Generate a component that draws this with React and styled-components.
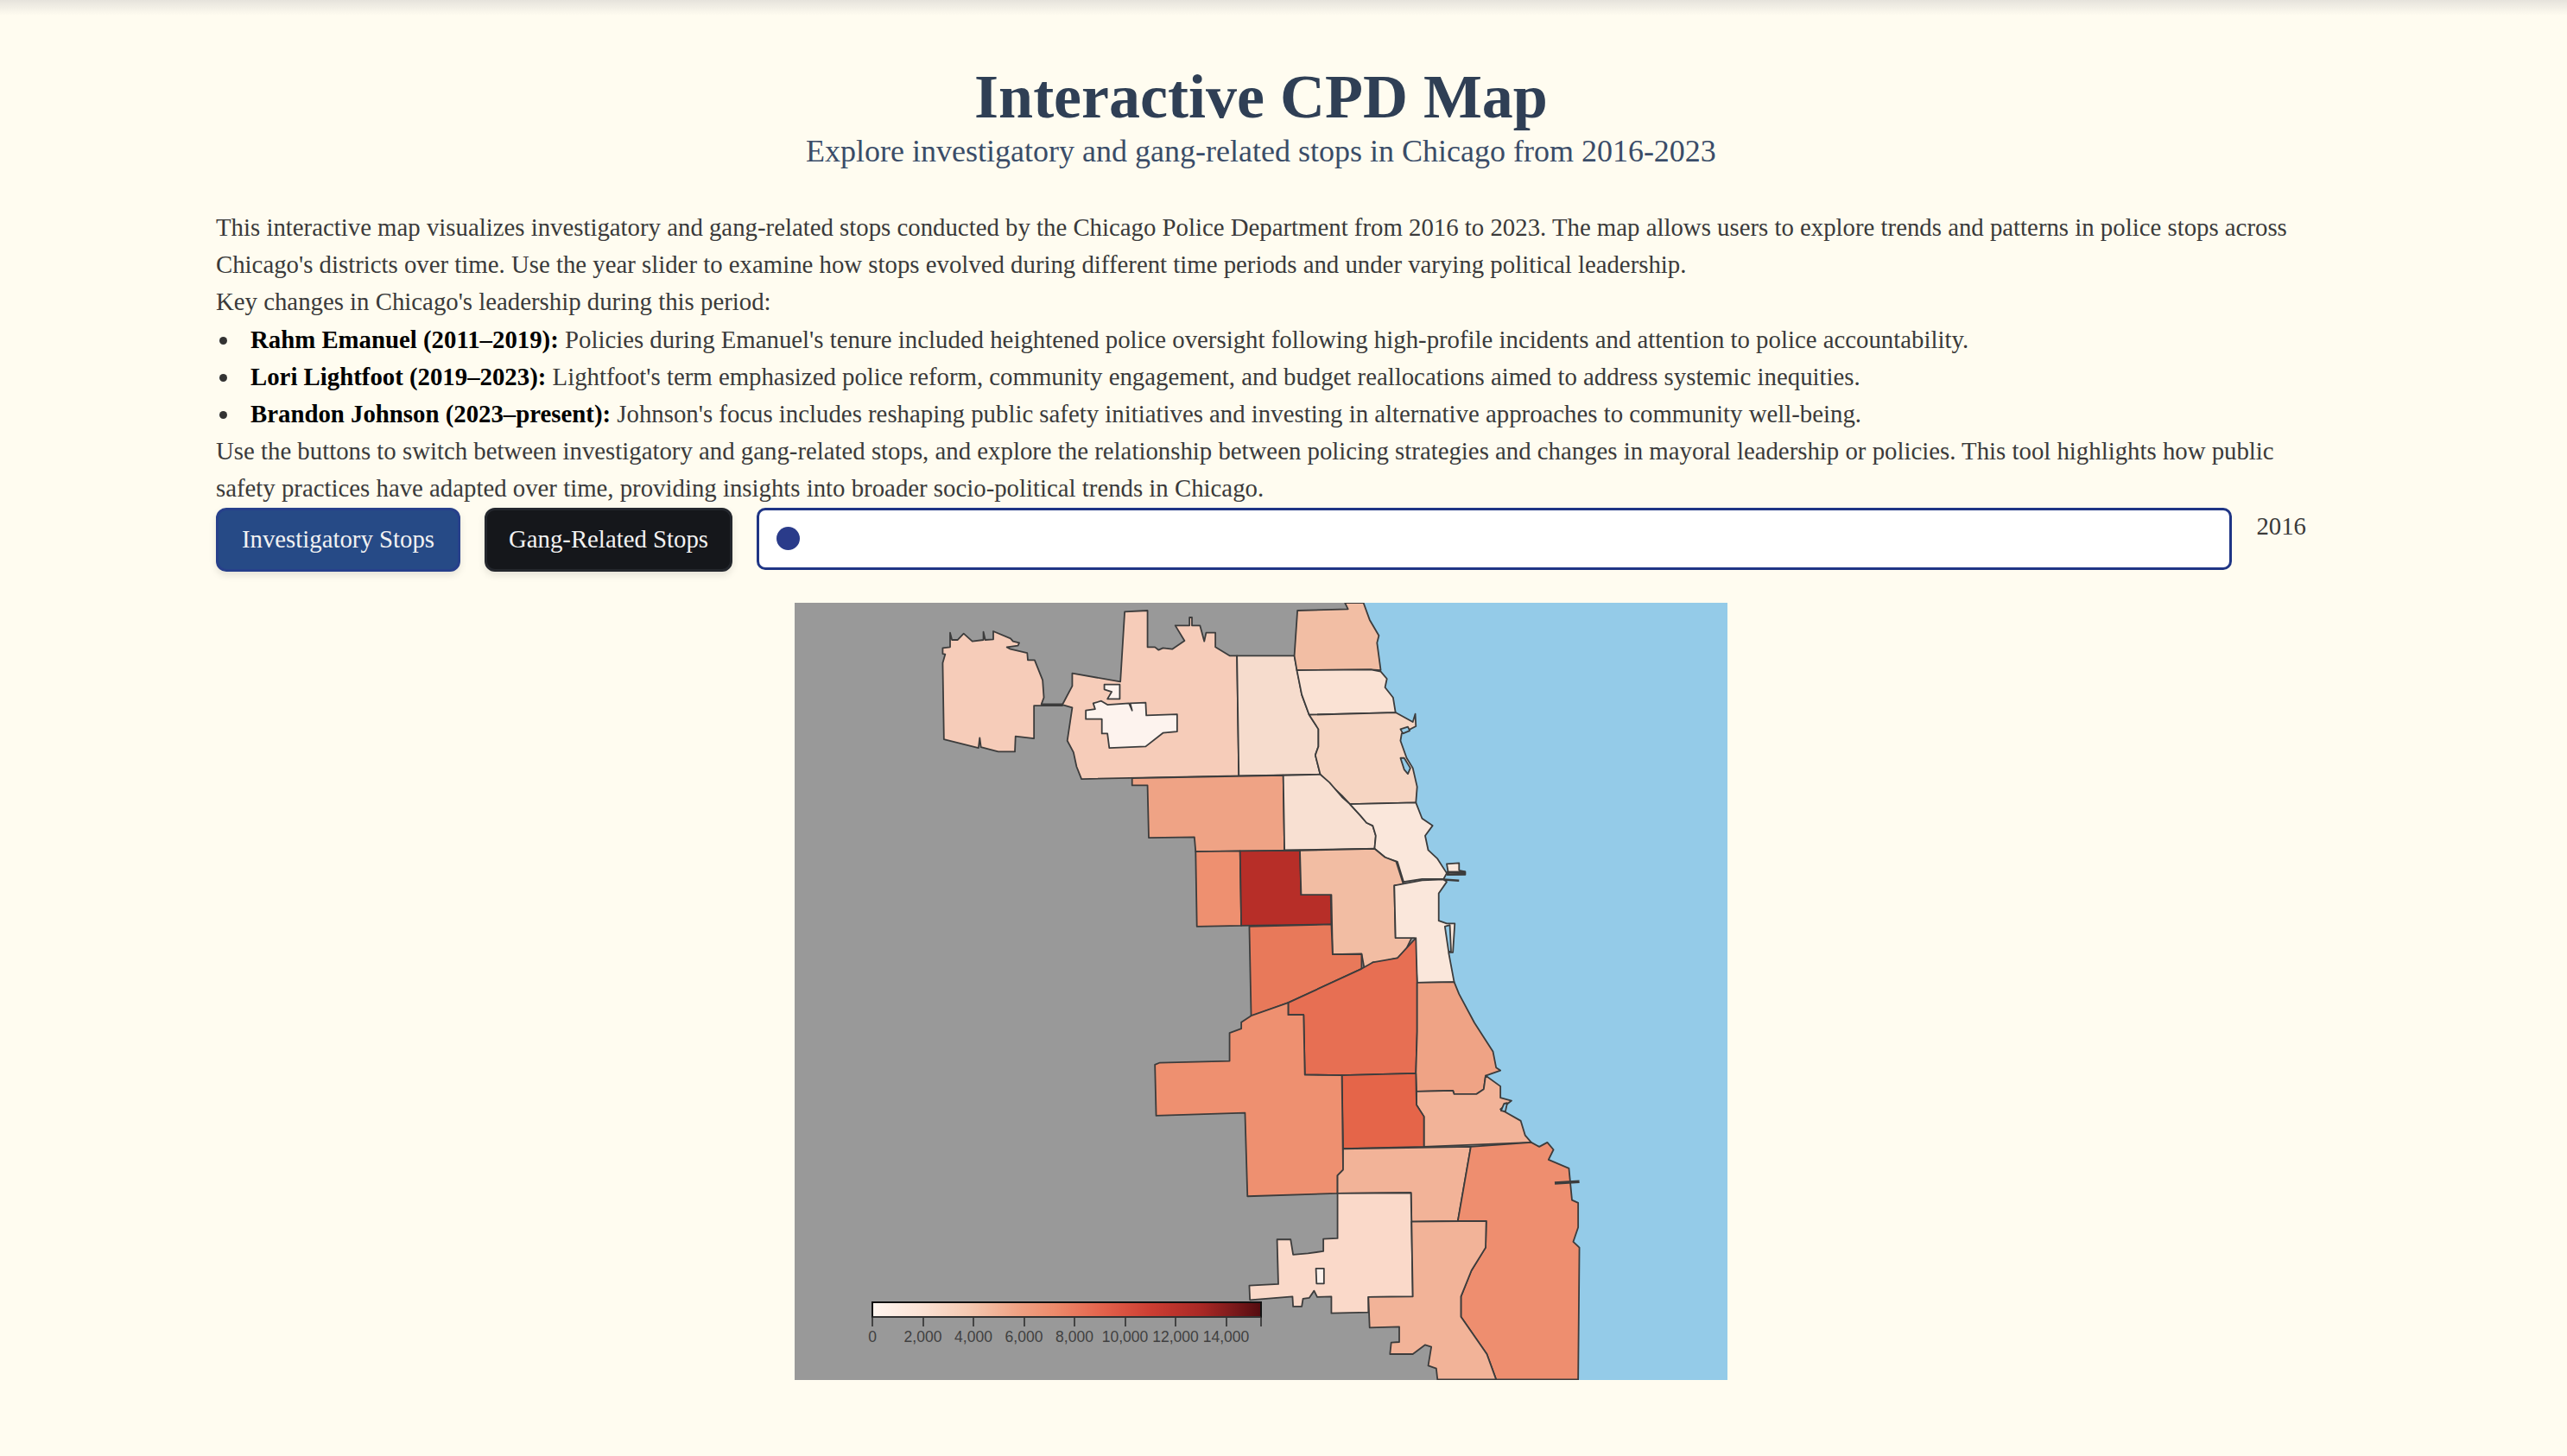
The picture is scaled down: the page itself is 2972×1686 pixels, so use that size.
import React from 'react';
import styled, { createGlobalStyle } from 'styled-components';

const Global = createGlobalStyle`
  html, body { margin: 0; padding: 0; background: #fffcf0; }
  body { font-family: "Liberation Serif", "Times New Roman", serif; color: #3a3a3a; }
`;
const Page = styled.div`
  position: relative;
  box-sizing: border-box;
  min-height: 1686px;
  padding: 72px 302px 0 250px;
  background: #fffcf0;
  overflow: hidden;
`;
const TopShade = styled.div`
  position: absolute;
  top: 0; left: 0; right: 0;
  height: 18px;
  background: linear-gradient(to bottom, #e6e3dc, #fffcf0);
`;
const Header = styled.header`
  text-align: center;
  margin-bottom: 44px;
`;
const Title = styled.h1`
  margin: 0;
  font-size: 72px;
  line-height: 80px;
  font-weight: 700;
  color: #2f3f55;
`;
const Subtitle = styled.h2`
  margin: 0;
  font-size: 36px;
  line-height: 46px;
  font-weight: 400;
  color: #3a4c68;
`;
const Para = styled.p`
  margin: 0;
  font-size: 28.8px;
  line-height: 43.2px;
  color: #3a3a3a;
`;
const List = styled.ul`
  margin: 0;
  padding: 0 0 0 40px;
  list-style: none;
  font-size: 28.8px;
  line-height: 43.2px;
  color: #3a3a3a;
`;
const Item = styled.li`
  position: relative;
  &::before {
    content: "";
    position: absolute;
    left: -36px;
    top: 18px;
    width: 9px;
    height: 9px;
    border-radius: 50%;
    background: #333;
  }
`;
const Strong = styled.strong`
  color: #000;
  font-weight: 700;
`;
const Controls = styled.div`
  display: flex;
  align-items: flex-start;
  gap: 28px;
`;
const Button = styled.button`
  flex: none;
  box-sizing: border-box;
  height: 74px;
  width: ${p => p.$w}px;
  padding: 0;
  border-radius: 12px;
  border: 3px solid ${p => (p.$active ? '#27408b' : '#24272d')};
  background: ${p => (p.$active ? '#264a86' : '#15171b')};
  color: #f2f2f2;
  font-family: inherit;
  font-size: 28.8px;
  box-shadow: 0 4px 8px rgba(0, 0, 0, 0.1);
`;
const Range = styled.input`
  flex: 1;
  min-width: 0;
  box-sizing: border-box;
  height: 72px;
  margin: 0;
  padding: 0 20px;
  appearance: none;
  -webkit-appearance: none;
  background: #fff;
  border: 3.5px solid #1f3585;
  border-radius: 10px;
  &::-webkit-slider-thumb {
    -webkit-appearance: none;
    width: 27px;
    height: 27px;
    border-radius: 50%;
    background: #2a3b8a;
  }
`;
const Year = styled.span`
  flex: none;
  font-size: 28.8px;
  line-height: 43px;
  color: #3a3a3a;
`;
const MapFrame = styled.div`
  position: relative;
  width: 1080px;
  height: 900px;
  margin: 36px auto 0;
  background: #999999;
`;
const MapSvg = styled.svg`
  display: block;
  width: 100%;
  height: 100%;
`;
const Legend = styled.div`
  position: absolute;
  left: 89px;
  top: 809px;
  width: 452px;
`;
const Bar = styled.div`
  box-sizing: border-box;
  height: 19px;
  border: 2px solid #111;
  border-bottom-color: #333;
  background: linear-gradient(to right, #fff5ef 0%, #fbe3d6 12%, #f4c8b0 25%, #efa385 37%, #ec8a6b 47%, #e2604a 60%, #cb3d32 72%, #a82825 85%, #7c1a1b 93%, #550c10 100%);
`;
const Ticks = styled.div`
  position: relative;
  height: 10px;
`;
const Tick = styled.span`
  position: absolute;
  top: 0;
  width: 2px;
  height: 10px;
  background: #444;
`;
const TickLabels = styled.div`
  position: relative;
  height: 22px;
`;
const TickLabel = styled.span`
  position: absolute;
  top: 2px;
  transform: translateX(-50%);
  font-family: "Liberation Sans", Arial, sans-serif;
  font-size: 17.5px;
  line-height: 20px;
  color: #404040;
`;

// Coordinates are traced in two crops; the lower crop's y is offset by 1410 units.
const upper = s => s.trim().split(/\s+/);
const lower = s => upper(s).map(p => {
  const [x, y] = p.split(',').map(Number);
  return `${x},${y + 1410}`;
});
const pts = (up, low) => [...(up ? upper(up) : []), ...(low ? lower(low) : [])].join(' ');

const districts = [
  ['#f6ccb9', pts('280,155 283,180 292,180 302,158 316,185 334,180 334,152 337,180 350,178 350,150 378,175 382,185 392,190 390,200 372,205 378,212 405,225 406,250 417,250 430,320 432,380 428,403 462,403 462,408 416,408 416,522 386,515 385,568 358,568 330,552 328,520 326,555 270,525 268,260 272,230 268,228 268,208 280,205')],
  ['#f6ccb9', pts('563,82 600,78 600,205 612,205 618,215 625,208 640,212 660,183 645,130 668,130 668,102 672,102 672,130 685,130 692,185 695,155 710,155 710,205 733,235 745,235 748,652 493,663 485,620 480,570 470,530 478,415 462,405 478,340 478,296 556,325')],
  ['#fdf3ee', pts('500,425 515,420 512,400 525,392 535,405 570,400 575,425 572,400 597,398 598,442 648,438 648,498 625,503 597,550 538,555 535,505 526,505 526,455 500,455')],
  ['#fdf3ee', pts('530,335 555,335 555,385 535,385 542,360 530,352')],
  ['#f6dccd', pts('745,235 838,235 850,370 862,440 877,490 877,550 872,580 880,647 748,652')],
  ['#f2bea4', pts('843,78 925,73 920,51 950,51 960,110 975,165 972,190 978,285 962,283 842,285 838,235')],
  ['#fae2d4', pts('842,285 962,283 978,290 988,315 985,345 998,380 1002,432 862,440 850,370')],
  ['#f6d5c2', pts('862,440 1002,432 1030,465 1034,437 1035,480 1012,505 1010,530 1020,590 1030,625 1037,690 1035,745 928,750 915,720 890,670 880,647 872,580 877,550 877,490')],
  ['#efa385', pts('575,660 820,650 822,912 678,915 676,865 602,867 600,685 575,685')],
  ['#f8e0d2', pts('820,650 880,647 895,675 915,725 928,750 945,790 955,815 965,825 970,860 968,905 822,910')],
  ['#fae7db', pts('1085,958 1105,955 1105,980 1115,985 1115,995 1088,995')],
  ['#fae7db', pts('928,750 1035,745 1045,800 1062,825 1050,860 1055,910 1070,940 1085,990 1080,1010 1045,1010 1015,1020 1005,950 985,935 968,905 970,860 965,825 955,815 945,790')],
  ['#ee9070', pts('678,915 750,913 752,1172 680,1175')],
  ['#b72e28', pts('750,913 847,911 849,1065 897,1065 898,1168 752,1172')],
  ['#f2bda3', pts('847,911 968,905 985,935 1003,950 1015,1030 1000,1033 1002,1215 1028,1215 1020,1250 1005,1285 975,1300 965,1300 952,1328 947,1270 900,1272 898,1065 849,1065')],
  ['#fae7db', pts('1000,1033 1045,1015 1080,1012 1085,1020 1072,1060 1072,1155 1085,1165 1098,1165 1095,1265 1088,1265 1097,1368 1037,1370 1033,1215 1002,1215')],
  ['#e8795a', pts('765,1175 898,1168 900,1272 947,1272 947,1322 828,1440 768,1487')],
  ['#e76f53', pts('947,1322 965,1300 1005,1285 1035,1215 1037,1370', '1037,130 1035,275 915,282 855,280 853,72 828,72 828,30')],
  ['#efa385', pts('1037,1370 1097,1368', '1105,0 1130,100 1160,200 1165,255 1172,265 1148,283 1145,330 1133,347 1097,347 1095,335 1036,338 1035,275 1037,130')],
  ['#f2b398', pts('', '1036,338 1095,335 1097,347 1133,347 1145,330 1148,283 1172,320 1172,360 1190,370 1172,400 1205,440 1212,490 1222,515 1048,530 1048,425 1036,385')],
  ['#e56549', pts('', '915,282 1035,275 1036,385 1048,425 1048,530 917,537')],
  ['#ee9070', pts('', '828,30 828,72 853,72 855,280 915,282 917,610 908,630 908,692 762,702 758,412 614,422 612,245 620,238 733,232 733,135 752,120 752,98 768,75')],
  ['#f2b398', pts('', '917,537 1124,530 1103,788 1028,790 1027,690 908,692 908,630 917,610')],
  ['#ee8e6f', pts('', '1124,530 1222,515 1235,530 1248,515 1258,540 1250,575 1283,605 1288,715 1298,725 1298,810 1290,860 1300,880 1298,1338 1165,1338 1150,1250 1108,1120 1108,1050 1125,960 1148,880 1149,788 1103,788')],
  ['#fad9c9', pts('', '908,692 1027,690 1030,1050 958,1052 958,1105 898,1108 898,1050 875,1052 870,1030 862,1055 852,1058 850,1085 836,1085 835,1050 766,1062 765,1012 812,1007 810,852 832,852 836,905 860,900 885,893 885,850 908,848')],
  ['#fdf3ee', pts('', '873,953 886,953 886,1005 874,1005')],
  ['#f2b398', pts('', '1028,790 1149,788 1148,880 1125,960 1108,1050 1108,1120 1150,1250 1165,1338 1070,1338 1068,1300 1055,1290 1060,1225 1050,1218 1030,1250 993,1250 995,1210 1008,1208 1008,1155 960,1158 958,1052 1030,1050')],
  ['#94cbe8', pts('1010,490 1022,482 1025,495 1014,505')],
  ['#94cbe8', pts('1010,590 1016,590 1026,625 1022,645 1016,630')],
  ['#94cbe8', pts('1082,1175 1090,1170 1092,1262 1088,1262')],
  ['#94cbe8', pts('', '1178,380 1183,378 1180,408 1173,405')],
];

const lake = pts('945,51 1540,51', '1540,1340 1290,1340 1270,900 1190,530 1130,330 1090,150') + ' ' + upper('1050,1370 1040,1010 1000,745 980,440 960,285').join(' ');

const piers = [
  [1085, 987, 1115, 987, 3],
  [1085, 995, 1115, 993, 2.5],
  [1080, 1012, 1105, 1016, 2.5],
  [1260, 2066, 1300, 2061, 3.5],
];

const ticks = [0, 2000, 4000, 6000, 8000, 10000, 12000, 14000];
const PX_PER_UNIT = 58.5 / 2000;

export default function App() {
  return (
    <Page>
      <Global />
      <TopShade />
      <Header>
        <Title>Interactive CPD Map</Title>
        <Subtitle>Explore investigatory and gang-related stops in Chicago from 2016-2023</Subtitle>
      </Header>
      <Para>
        This interactive map visualizes investigatory and gang-related stops conducted by the Chicago Police Department from 2016 to 2023. The map allows users to explore trends and patterns in police stops across Chicago's districts over time. Use the year slider to examine how stops evolved during different time periods and under varying political leadership.
      </Para>
      <Para>Key changes in Chicago's leadership during this period:</Para>
      <List>
        <Item><Strong>Rahm Emanuel (2011–2019):</Strong> Policies during Emanuel's tenure included heightened police oversight following high-profile incidents and attention to police accountability.</Item>
        <Item><Strong>Lori Lightfoot (2019–2023):</Strong> Lightfoot's term emphasized police reform, community engagement, and budget reallocations aimed to address systemic inequities.</Item>
        <Item><Strong>Brandon Johnson (2023–present):</Strong> Johnson's focus includes reshaping public safety initiatives and investing in alternative approaches to community well-being.</Item>
      </List>
      <Para>
        Use the buttons to switch between investigatory and gang-related stops, and explore the relationship between policing strategies and changes in mayoral leadership or policies. This tool highlights how public safety practices have adapted over time, providing insights into broader socio-political trends in Chicago.
      </Para>
      <Controls>
        <Button $active $w={283}>Investigatory Stops</Button>
        <Button $w={287}>Gang-Related Stops</Button>
        <Range type="range" min="2016" max="2023" step="1" defaultValue="2016" aria-label="Year" />
        <Year>2016</Year>
      </Controls>
      <MapFrame>
        <MapSvg viewBox="28 51 1512 2699" preserveAspectRatio="none" role="img" aria-label="Choropleth map of Chicago police districts">
          <polygon points={lake} fill="#94cbe8" />
          {districts.map(([fill, p], i) => (
            <polygon key={i} points={p} fill={fill} stroke="#3c3c3c" strokeWidth="1.8" strokeLinejoin="round" vectorEffect="non-scaling-stroke" />
          ))}
          {piers.map(([x1, y1, x2, y2, w], i) => (
            <line key={i} x1={x1} y1={y1} x2={x2} y2={y2} stroke="#3c3c3c" strokeWidth={w} vectorEffect="non-scaling-stroke" />
          ))}
        </MapSvg>
        <Legend>
          <Bar />
          <Ticks>
            {ticks.map(t => <Tick key={t} style={{ left: t * PX_PER_UNIT }} />)}
            <Tick style={{ left: 450 }} />
          </Ticks>
          <TickLabels>
            {ticks.map(t => (
              <TickLabel key={t} style={{ left: t * PX_PER_UNIT + 1 }}>{t.toLocaleString('en-US')}</TickLabel>
            ))}
          </TickLabels>
        </Legend>
      </MapFrame>
    </Page>
  );
}
